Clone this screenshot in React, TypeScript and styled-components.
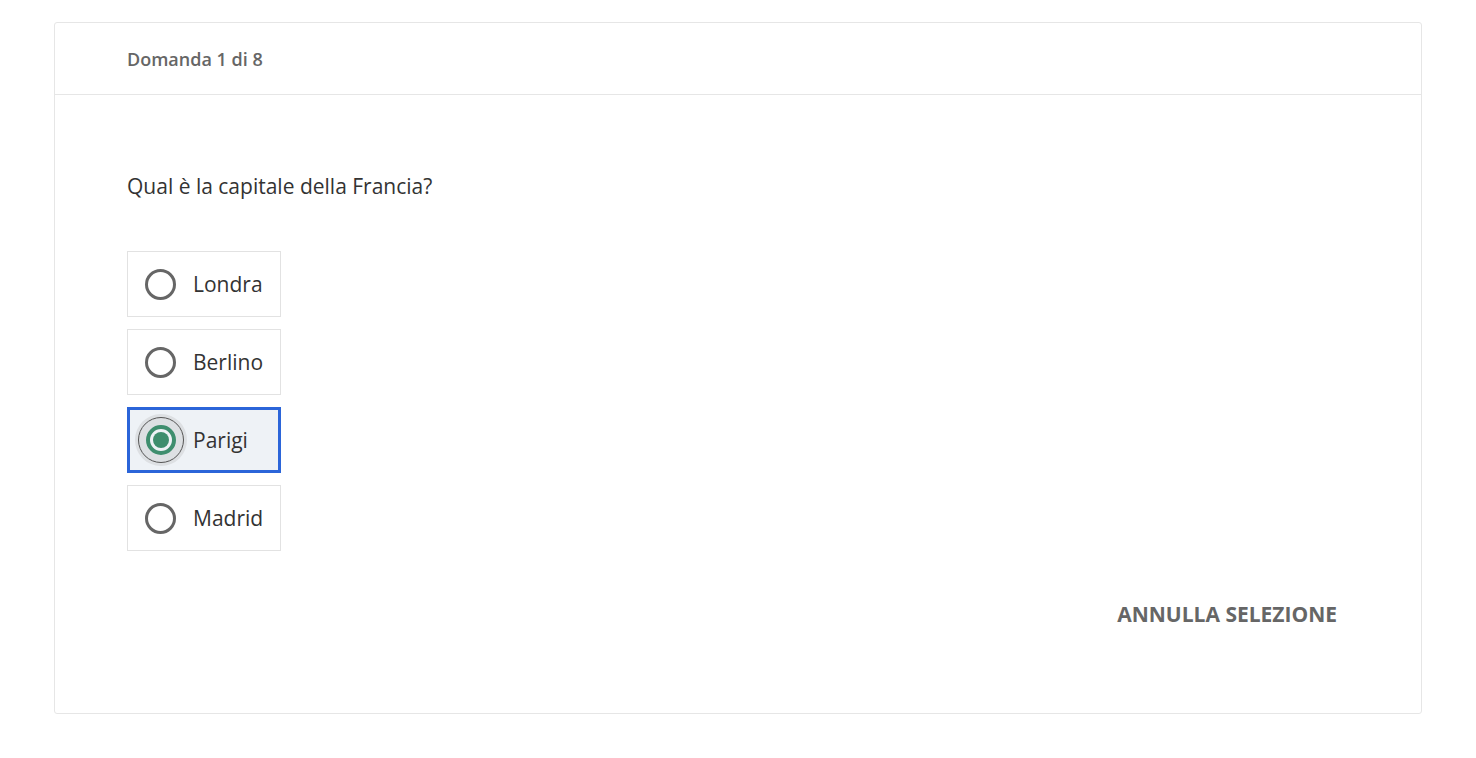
import React, { useState } from "react";
import styled, { createGlobalStyle, css } from "styled-components";

const GlobalStyle = createGlobalStyle`
  html, body { margin: 0; padding: 0; background: #ffffff; }
  body { font-family: "Open Sans", "Noto Sans", sans-serif; color: #333; }
  * { box-sizing: border-box; }
`;

const Page = styled.div`
  padding-top: 22px;
  display: flex;
  justify-content: center;
`;

const Card = styled.section`
  width: 1368px;
  border: 1px solid #e6e6e6;
  border-radius: 3px;
  background: #fff;
`;

const Header = styled.header`
  height: 72px;
  padding: 0 72px;
  display: flex;
  align-items: center;
  border-bottom: 1px solid #e6e6e6;
`;

const Counter = styled.span`
  font-size: 18px;
  font-weight: 600;
  color: #666;
`;

const Body = styled.div`
  padding: 76px 72px 77px;
  display: flex;
  flex-direction: column;
`;

const Question = styled.h2`
  margin: 0 0 50px;
  font-size: 21px;
  line-height: 30px;
  font-weight: 400;
  color: #333;
`;

const Options = styled.div`
  display: flex;
  flex-direction: column;
  gap: 12px;
`;

const Option = styled.label<{ $selected: boolean }>`
  width: 154px;
  height: 66px;
  display: flex;
  align-items: center;
  gap: 17px;
  padding-left: 17px;
  border: 1px solid #e2e2e2;
  cursor: pointer;
  ${(p) =>
    p.$selected &&
    css`
      border: 3px solid #2b65d9;
      background: #eef2f6;
      padding-left: 15px;
    `}
`;

const RadioWrap = styled.span`
  position: relative;
  width: 31px;
  height: 31px;
  flex: none;
  display: flex;
  align-items: center;
  justify-content: center;
`;

const Halo = styled.span`
  position: absolute;
  left: 50%;
  top: 50%;
  width: 52px;
  height: 52px;
  margin: -26px 0 0 -26px;
  border-radius: 50%;
  background: #dde0e3;
  &::after {
    content: "";
    position: absolute;
    inset: 3px;
    border-radius: 50%;
    border: 1px solid #555;
  }
`;

const Ring = styled.span<{ $selected: boolean }>`
  position: relative;
  width: 31px;
  height: 31px;
  border-radius: 50%;
  border: 3px solid #666;
  display: flex;
  align-items: center;
  justify-content: center;
  ${(p) =>
    p.$selected &&
    css`
      width: 30px;
      height: 30px;
      border: 4px solid #3e8e6e;
      background: #eef2f6;
    `}
`;

const Dot = styled.span`
  width: 16px;
  height: 16px;
  border-radius: 50%;
  background: #3e8e6e;
`;

const Label = styled.span`
  font-size: 21px;
  color: #333;
  line-height: 28px;
`;

const Footer = styled.div`
  margin-top: 41px;
  display: flex;
  justify-content: flex-end;
`;

const ClearButton = styled.button`
  border: 0;
  background: transparent;
  padding: 8px 12px;
  font-family: "Open Sans", "Noto Sans", sans-serif;
  font-size: 21px;
  line-height: 28px;
  font-weight: 700;
  color: #666;
  cursor: pointer;
`;

const answers = ["Londra", "Berlino", "Parigi", "Madrid"];

export default function App() {
  const [selected, setSelected] = useState<string | null>("Parigi");
  return (
    <>
      <GlobalStyle />
      <Page>
        <Card>
          <Header>
            <Counter>Domanda 1 di 8</Counter>
          </Header>
          <Body>
            <Question>Qual è la capitale della Francia?</Question>
            <Options>
              {answers.map((a) => {
                const isSel = selected === a;
                return (
                  <Option key={a} $selected={isSel} onClick={() => setSelected(a)}>
                    <RadioWrap>
                      {isSel && <Halo />}
                      <Ring $selected={isSel}>{isSel && <Dot />}</Ring>
                    </RadioWrap>
                    <Label>{a}</Label>
                  </Option>
                );
              })}
            </Options>
            <Footer>
              <ClearButton onClick={() => setSelected(null)}>ANNULLA SELEZIONE</ClearButton>
            </Footer>
          </Body>
        </Card>
      </Page>
    </>
  );
}
